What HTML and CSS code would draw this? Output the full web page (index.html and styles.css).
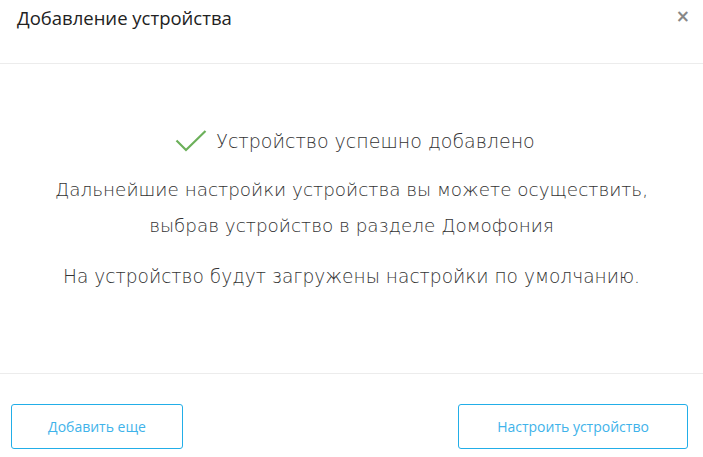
FILE: index.html
```html
<!DOCTYPE html>
<html lang="ru">
<head>
<meta charset="utf-8">
<link rel="stylesheet" href="styles.css">
</head>
<body>
<div class="modal">
  <header class="modal-header">
    <h1 class="title">Добавление устройства</h1>
    <button class="close" aria-label="Закрыть">×</button>
  </header>
  <main class="modal-body">
    <p class="success">
      <svg class="check" width="32" height="22" viewBox="0 0 32 22"><path d="M1.5 10.5 L11 20 L30.5 1" fill="none" stroke="#6cb05a" stroke-width="2.2"/></svg>
      <span>Устройство успешно добавлено</span>
    </p>
    <p class="info">Дальнейшие настройки устройства вы можете осуществить,<br>выбрав устройство в разделе Домофония</p>
    <p class="info note">На устройство будут загружены настройки по умолчанию.</p>
  </main>
  <footer class="modal-footer">
    <button class="btn btn-small">Добавить еще</button>
    <button class="btn btn-wide">Настроить устройство</button>
  </footer>
</div>
</body>
</html>
```
FILE: styles.css
```css
* { box-sizing: border-box; }
html, body { margin: 0; padding: 0; background: #fff; }
.modal { width: 703px; height: 457px; display: flex; flex-direction: column; }
.modal-header {
  height: 64px;
  border-bottom: 1px solid #ececec;
  display: flex;
  justify-content: space-between;
  align-items: flex-start;
  padding: 5px 13px 0 17px;
}
.title {
  margin: 0;
  font-family: "Open Sans", sans-serif;
  font-weight: 400;
  font-size: 18.5px;
  line-height: 26px;
  color: #222;
}
.close {
  border: 0; background: none; padding: 0;
  font-family: "DejaVu Sans", sans-serif;
  font-weight: bold;
  font-size: 17px;
  line-height: 22px;
  color: #888;
}
.modal-body {
  height: 310px;
  border-bottom: 1px solid #ececec;
  display: flex;
  flex-direction: column;
  align-items: center;
  padding-top: 64px;
  font-family: "DejaVu Sans", sans-serif;
  font-weight: 300;
  color: #333;
}
.success {
  margin: 0;
  padding-left: 7px;
  display: flex;
  align-items: center;
  gap: 9px;
  font-size: 19px;
  line-height: 26px;
}
.info {
  margin: 18px 0 0;
  text-align: center;
  font-size: 18.4px;
  line-height: 36px;
}
.note { margin-top: 15px; font-size: 18.6px; }
.modal-footer {
  flex: 1;
  display: flex;
  justify-content: space-between;
  align-items: flex-start;
  padding: 30px 15px 0 11px;
}
.btn {
  height: 45px;
  background: #fff;
  border: 1px solid #22aee8;
  border-radius: 3px;
  font-family: "Open Sans", sans-serif;
  font-size: 14px;
  color: #3fb3ea;
  cursor: pointer;
}
.btn-small { width: 172px; }
.btn-wide { width: 230px; }
```
